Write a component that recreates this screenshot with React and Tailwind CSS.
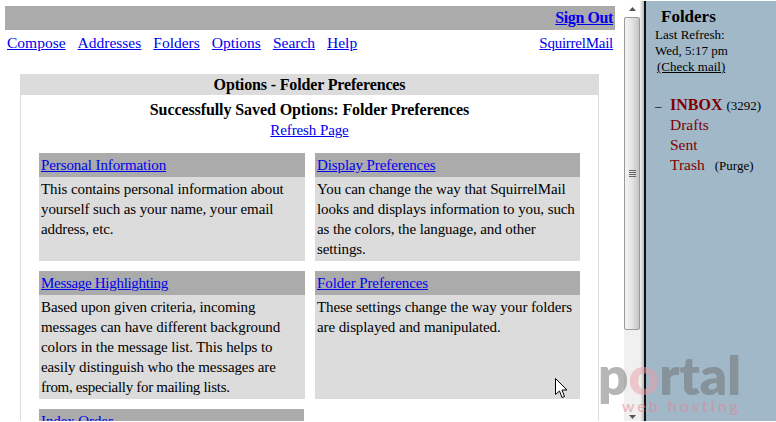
const cards = [
  [
    {
      title: 'Personal Information',
      lines: ['This contains personal information about', 'yourself such as your name, your email', 'address, etc.'],
      h: 'h-[84px]',
      w: 'w-[266px]',
    },
    {
      title: 'Display Preferences',
      lines: ['You can change the way that SquirrelMail', 'looks and displays information to you, such', 'as the colors, the language, and other', 'settings.'],
      h: 'h-[84px]',
      w: 'w-[265px]',
    },
  ],
  [
    {
      title: 'Message Highlighting',
      lines: ['Based upon given criteria, incoming', 'messages can have different background', 'colors in the message list. This helps to', 'easily distinguish who the messages are', 'from, especially for mailing lists.'],
      h: 'h-[104px]',
      w: 'w-[266px]',
    },
    {
      title: 'Folder Preferences',
      lines: ['These settings change the way your folders', 'are displayed and manipulated.'],
      h: 'h-[104px]',
      w: 'w-[265px]',
    },
  ],
];

const navLinks = ['Compose', 'Addresses', 'Folders', 'Options', 'Search', 'Help'];

// these render narrower in the original than the rest of the copy
const tight = ['Message Highlighting', 'from, especially for mailing lists.'];

function Card({ card }) {
  return (
    <div className={`${card.w} shrink-0`}>
      <div className={`h-6 bg-[#ababab] pl-[2px] pt-[2px] text-[#0000ee] underline ${tight.includes(card.title) ? 'tracking-[-0.3px]' : ''}`}>{card.title}</div>
      <div className={`${card.h} bg-[#dcdcdc] pl-[2px] pt-[2px]`}>
        {card.lines.map((line) => (
          <div key={line} className={`whitespace-nowrap ${tight.includes(line) ? 'tracking-[-0.3px]' : ''}`}>{line}</div>
        ))}
      </div>
    </div>
  );
}

function Scrollbar() {
  return (
    <div className="flex h-full w-4 shrink-0 flex-col bg-[#f0f0f0]">
      <div className="flex h-4 items-center justify-center bg-white">
        <svg width="7" height="4" viewBox="0 0 7 4"><path d="M0 4 L3.5 0 L7 4 Z" fill="#555" /></svg>
      </div>
      <div className="flex h-[313px] items-center justify-center rounded-[2px] border border-[#9a9a9a] bg-gradient-to-r from-[#f4f4f4] via-[#e4e4e4] to-[#c4c4c4]">
        <div className="flex w-[7px] flex-col gap-[1px]">
          <div className="h-px bg-[#666]" />
          <div className="h-px bg-[#666]" />
          <div className="h-px bg-[#666]" />
          <div className="h-px bg-[#666]" />
        </div>
      </div>
      <div className="flex-1" />
      <div className="flex h-[9px] items-center justify-center">
        <svg width="7" height="4" viewBox="0 0 7 4"><path d="M0 0 L7 0 L3.5 4 Z" fill="#555" /></svg>
      </div>
    </div>
  );
}

export default function App() {
  return (
    <div className="relative h-[422px] w-[776px] overflow-hidden bg-white py-px font-['Liberation_Serif',serif] text-[15px] leading-5 tracking-[-0.1px] text-black">
      <div className="flex h-full">
        {/* Main frame */}
        <div className="w-[624px] shrink-0 overflow-hidden pt-[5px] pl-[5px]">
          <div className="flex h-6 w-[610px] items-center justify-end bg-[#ababab] pr-[2px] text-base leading-5 font-bold tracking-[-0.4px] text-[#0000ee] underline">Sign Out</div>
          <div className="mt-px flex h-6 w-[610px] items-center justify-between px-[2px]">
            <div className="flex gap-3 text-[15.5px] tracking-normal text-[#0000ee] underline">
              {navLinks.map((link) => (
                <span key={link}>{link}</span>
              ))}
            </div>
            <span className="tracking-[-0.25px] text-[#0000ee] underline">SquirrelMail</span>
          </div>

          <div className="mt-[19px] ml-[15px] w-[579px] border-x border-[#dcdcdc]">
            <div className="flex h-[21px] items-center justify-center bg-[#dcdcdc] pt-px text-base leading-5 font-bold tracking-[-0.15px]">Options - Folder Preferences</div>
            <div className="flex flex-col items-center pt-[5px]">
              <div className="text-base leading-5 font-bold tracking-[-0.09px]">Successfully Saved Options: Folder Preferences</div>
              <div className="text-[#0000ee] underline">Refresh Page</div>
            </div>
            <div className="mt-[13px] flex flex-col gap-[10px] pl-[18px]">
              {cards.map((row) => (
                <div key={row[0].title} className="flex gap-[10px]">
                  <Card card={row[0]} />
                  <Card card={row[1]} />
                </div>
              ))}
              <div className="w-[265px]">
                <div className="h-6 bg-[#ababab] pl-[2px] pt-[2px] text-[#0000ee] underline">Index Order</div>
              </div>
            </div>
          </div>
        </div>

        <Scrollbar />

        {/* Frame divider */}
        <div className="h-full w-1 shrink-0 bg-gradient-to-r from-[#f4f4f4] to-[#b8b8b8]" />
        <div className="h-full w-[2px] shrink-0 bg-[#111]" />

        {/* Folder list */}
        <div className="flex-1 bg-[#a0b8c8] pt-[6px] tracking-normal">
          <div className="pl-[15px] text-[17px] font-bold">Folders</div>
          <div className="pl-[9px] text-[13px] leading-4">
            <div>Last Refresh:</div>
            <div>Wed, 5:17 pm</div>
            <div className="pl-[2px]"><span className="underline">(Check mail)</span></div>
          </div>
          <div className="mt-5 flex items-baseline pl-[9px]">
            <span className="w-[15px] text-[13px]">–</span>
            <span className="text-base leading-5 font-bold text-[#800000]">INBOX</span>
            <span className="ml-1 text-[13px]">(3292)</span>
          </div>
          <div className="-mt-px pl-6 text-[15.5px] text-[#800000]">
            <div>Drafts</div>
            <div>Sent</div>
            <div className="flex items-baseline">
              <span>Trash</span>
              <span className="ml-[10px] text-[13px] text-black">(Purge)</span>
            </div>
          </div>
        </div>
      </div>

      {/* Watermark */}
      <div className="pointer-events-none absolute top-[352px] left-[597px] flex w-[144px] flex-col items-end font-['Lato',sans-serif] tracking-normal opacity-50">
        <div className="text-[53px] leading-[46px] font-extrabold text-[#6f6f6f]">
          p<span className="text-[#e8a0a8]">o</span>rtal
        </div>
        <div className="text-base leading-4 font-semibold tracking-[3px] text-[#e88090]">web hosting</div>
      </div>

      {/* Mouse cursor */}
      <svg className="absolute top-[378px] left-[555px]" width="13" height="21" viewBox="0 0 13 21">
        <path d="M0.5 0.5 L0.5 16.5 L4.5 13 L7 19.5 L9.5 18.5 L7 12 L12 12 Z" fill="white" stroke="black" strokeWidth="1" />
      </svg>
    </div>
  );
}
